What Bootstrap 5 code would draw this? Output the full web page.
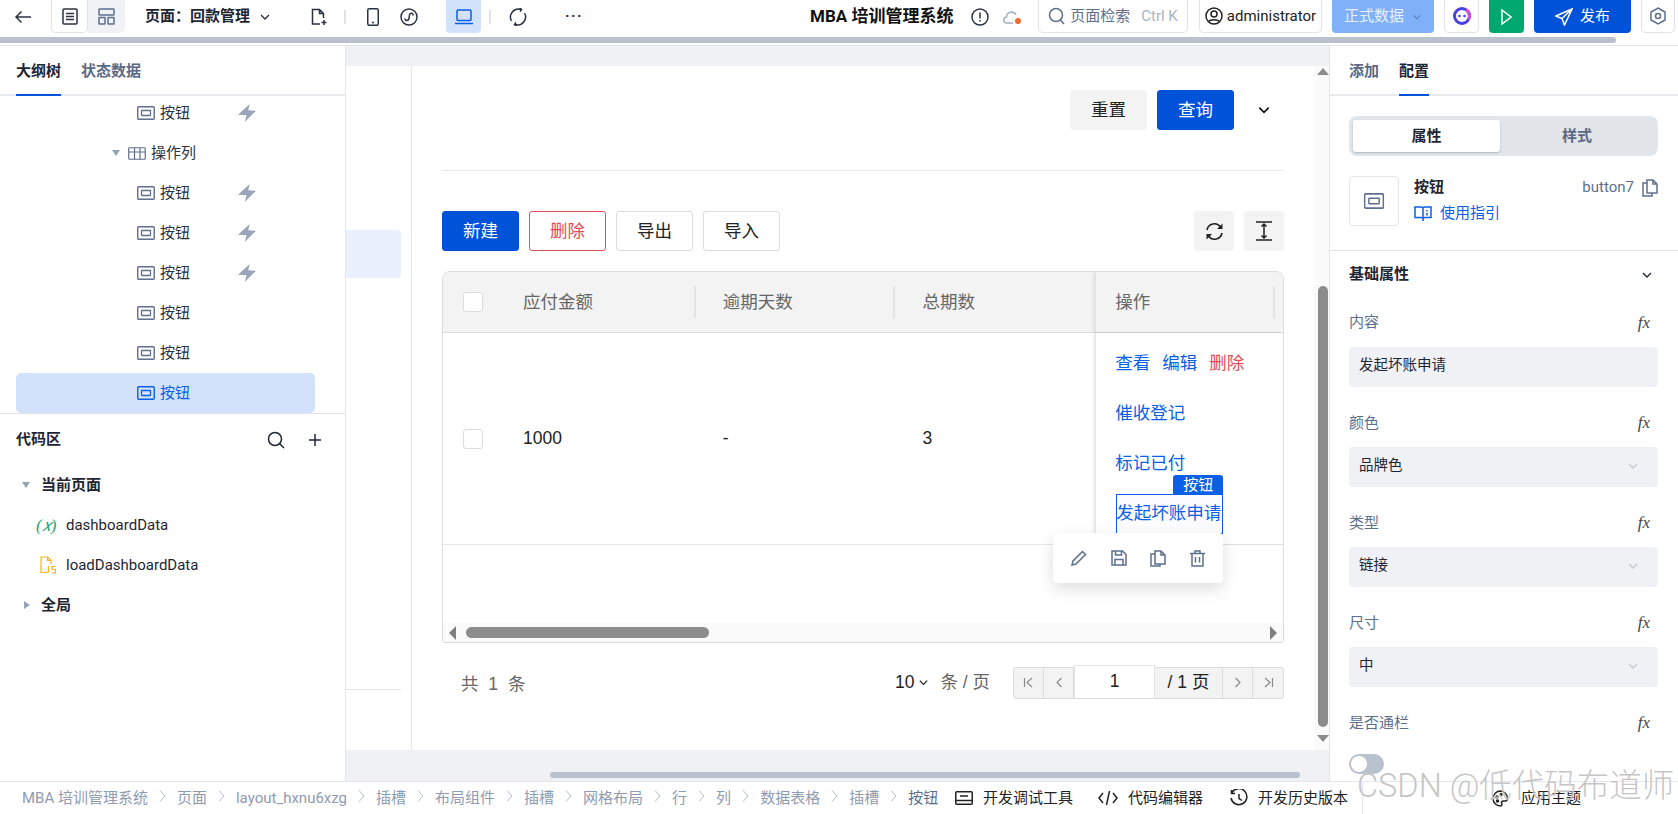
<!DOCTYPE html>
<html lang="zh-CN">
<head>
<meta charset="UTF-8">
<meta name="viewport" content="width=device-width, initial-scale=1.0">
<title>MBA培训管理系统</title>
<link href="https://cdn.jsdelivr.net/npm/bootstrap@5.3.0/dist/css/bootstrap.min.css" rel="stylesheet">
<style>
html, body { height: 100%; overflow: hidden; }
body { font-family: Roboto, "Noto Sans CJK SC", sans-serif; font-size: 15px; color: #1f2633; background: #fff; }
svg { display: block; flex: none; }
.ic { fill: none; stroke: currentColor; stroke-width: 1.5; }
.app { height: 814px; width: 1678px; position: relative; }

/* top bar */
.topbar { height: 37px; }
.seg-ic { width: 37px; height: 33px; }
.seg-on { background: #fff; border: 1px solid #dfe2e8; border-top: 0; border-radius: 0 0 5px 5px; color: #2a3242; }
.seg-off { background: #f0f2f5; border-radius: 0 0 5px 0; color: #5e6f8e; }
.page-name { width: 106px; margin-left: 20px; font-weight: 600; white-space: nowrap; }
.top-ic { position: absolute; top: 0; height: 33px; display: flex; align-items: center; justify-content: center; color: #2a3242; }
.top-sep { width: 2px; height: 14px; background: #dfe2e8; }
.app-title { font-size: 17px; font-weight: 700; white-space: nowrap; color: #111; }
.top-box { height: 33px; border: 1px solid #dfe2e8; border-top: 0; border-radius: 0 0 5px 5px; background: #fff; }
.top-strip { height: 9px; border-bottom: 1px solid #e4e6eb; }
.top-strip div { width: 1616px; height: 6px; background: #b9c1cd; border-radius: 0 3px 3px 0; }

/* main area */
.workspace { height: 735px; }
.side-left { width: 346px; border-right: 1px solid #e4e6eb; }
.tabs-row { height: 50px; border-bottom: 2px solid #e8eaee; padding-left: 16px; gap: 20px; }
.tab-item { height: 50px; line-height: 51px; color: #5a6a85; font-weight: 600; font-size: 15px; }
.tab-on { color: #1f2633; border-bottom: 2px solid #0052d9; }
.tree-box { height: 318px; overflow: hidden; border-bottom: 1px solid #dfe2e8; }
.tree-list { margin-top: -3px; }
.tree-row { height: 40px; margin: 0 30px 0 16px; padding-left: 121px; border-radius: 5px; color: #2a3242; position: relative; }
.tree-row span { margin-left: 5px; }
.tree-head { padding-left: 96px; }
.tree-sel { background: #d2e2fb; color: #0b5fe6; }
.tree-bolt { position: absolute; left: 222px; top: 11px; color: #9aa6b8; }
.tree-tb { color: #5e6f8e; }
.tree-sel .tree-tb { color: #0b5fe6; }
.code-head { height: 51px; padding: 0 24px 0 16px; font-weight: 600; }
.code-row { height: 40px; }
.caret-d { width: 0; height: 0; border: 4px solid transparent; border-top: 6px solid #98a3b5; border-bottom: 0; }
.caret-r { width: 0; height: 0; border: 4px solid transparent; border-left: 6px solid #98a3b5; border-right: 0; }

/* canvas */
.canvas-wrap { width: 983px; background: #eff1f5; }
.canvas-white { margin-top: 20px; height: 684px; background: #fff; }
.stub { width: 66px; border-right: 1px solid #e4e6eb; position: relative; }
.stub-hl { margin-top: 164px; width: 55px; height: 48px; background: #e9f1fe; border-radius: 0 4px 4px 0; }
.stub-line { margin-top: 411px; width: 55px; height: 1px; background: #e4e6eb; }
.page-main { width: 902px; padding: 24px 30px 0; }
.act-btn { height: 40px; width: 77px; border-radius: 3px; padding: 0; --bs-btn-font-size: 17.5px; }
.btn-soft { background: #f3f3f3; border-color: #f3f3f3; color: #222; }
.btn-brand { background: #0052d9; border-color: #0052d9; color: #fff; }
.btn-line { background: #fff; border-color: #dcdcdc; color: #222; }
.btn-red { background: #fff; border-color: #e34d59; color: #e34d59; }
.tool-btn { width: 40px; height: 40px; background: #f3f3f3; border-radius: 3px; color: #222; }
.rule { height: 1px; background: #e7e7e7; margin: 40px 0; }
.bar-gap { gap: 10px; }
.grid-box { margin-top: 20px; height: 372px; border: 1px solid #dcdcdc; border-radius: 8px 8px 3px 3px; overflow: hidden; position: relative; font-family: "Liberation Sans", "Noto Sans CJK SC", sans-serif; }
.grid-head { height: 61px; background: #f3f3f3; border-bottom: 1px solid #dcdcdc; color: #666; font-size: 17.5px; }
.grid-body { height: 212px; border-bottom: 1px solid #e7e7e7; font-size: 17.5px; color: #222; }
.col-chk { width: 53px; padding-left: 20px; }
.col-chk .form-check-input { width: 20px; height: 20px; margin: 0; border-color: #dcdcdc; border-radius: 3px; float: none; display: block; }
.col-txt { width: 200px; padding-left: 27px; position: relative; }
.col-fix { width: 188px; height: 100%; padding-left: 19px; position: relative; box-shadow: -2px 0 3px rgba(0,0,0,.07); border-left: 1px solid #e4e4e4; }
.head-sep { position: absolute; right: 0; top: 50%; margin-top: -16px; width: 2px; height: 32px; background: #e4e4e4; }
.op-link { color: #0b5fe6; text-decoration: none; }
.op-red { color: #e34d59; }
.op-line { height: 50px; gap: 12px; }
.grid-scroll { position: absolute; left: 0; right: 0; bottom: 0; height: 19px; background: #fafafa; padding: 0 6px; }
.hthumb { width: 243px; height: 11px; background: #8c8c8c; border-radius: 6px; margin-left: 10px; }
.tri-l { width: 0; height: 0; border: 7px solid transparent; border-right: 7px solid #7f7f7f; border-left: 0; }
.tri-r { width: 0; height: 0; border: 7px solid transparent; border-left: 7px solid #7f7f7f; border-right: 0; }
.sel-box { position: absolute; left: 20px; top: 161px; width: 107px; height: 40px; border: 1px solid #0b5fe6; line-height: 36px; white-space: nowrap; text-indent: -1px; background: rgba(250,250,253,.6); }
.sel-tag { position: absolute; right: -1px; top: -20px; width: 50px; height: 20px; background: #0b5fe6; color: #fff; font-size: 15px; line-height: 20px; text-align: center; text-indent: 0; border-radius: 3px 3px 0 0; }
.float-tools { position: absolute; left: 1053px; top: 533px; width: 170px; height: 50px; background: #fff; border-radius: 4px; box-shadow: 0 6px 16px rgba(0,0,0,.13); padding: 0 14px; color: #5e6f8e; z-index: 3; }
.pager { height: 78px; font-size: 17.5px; color: #222; padding-top: 1px; font-family: "Liberation Sans", "Noto Sans CJK SC", sans-serif; }
.pager-gray { color: #666; }
.pager-total { margin: 3px 0 0 19px; word-spacing: 5px; }
.pg-box { height: 32px; width: 271px; border: 1px solid #dcdcdc; border-radius: 3px; background: #f3f3f3; color: #8a8a8a; }
.pg-cell { width: 30px; height: 100%; border-right: 1px solid #dcdcdc; }
.pg-num { width: 81px; height: 34px; margin-top: -2px; background: #fff; border: 1px solid #e4e4e4; border-bottom-color: #dcdcdc; color: #222; }
.pg-all { width: 68px; height: 100%; color: #222; border-right: 1px solid #dcdcdc; }
.v-track { width: 15px; background: #fafafa; position: relative; }
.v-thumb { position: absolute; left: 4px; top: 220px; width: 10px; height: 441px; border-radius: 5px; background: #8c8c8c; }
.tri-u, .tri-dn { position: absolute; left: 3px; width: 0; height: 0; border: 6px solid transparent; }
.tri-u { top: 2px; border-bottom: 7px solid #8c8c8c; border-top: 0; }
.tri-dn { top: 669px; border-top: 7px solid #8c8c8c; border-bottom: 0; }
.canvas-bar { height: 31px; padding: 22px 0 0 204px; }
.canvas-bar div { width: 750px; height: 6px; background: #b9c1cd; border-radius: 3px; }

/* right panel */
.side-right { width: 349px; border-left: 1px solid #e4e6eb; }
.tabs-right { padding-left: 19px; }
.seg-switch { margin: 20px 20px 0 19px; height: 40px; background: #e2e5ea; border-radius: 8px; padding: 4px; font-weight: 600; color: #5a6a85; font-size: 15px; }
.seg-switch div { width: 147px; padding-top: 1px; }
.seg-active { background: #fff; color: #1f2633; border-radius: 3px; box-shadow: 0 1px 2px rgba(60,70,90,.3); }
.comp-info { margin: 20px 20px 0 19px; height: 50px; position: relative; }
.comp-ic { width: 50px; height: 50px; border: 1px solid #e4e6eb; border-radius: 4px; color: #5e6f8e; }
.guide { color: #0b5fe6; }
.prop-area { margin-top: 24px; border-top: 1px solid #e4e6eb; padding: 0 20px 0 19px; }
.prop-title { height: 47px; font-weight: 600; }
.prop-label { height: 48px; color: #5e6f8e; }
.fx { font-family: "Liberation Serif", serif; font-style: italic; font-size: 17px; color: #444; padding-right: 8px; }
.prop-input { height: 40px; background: #f0f1f5; border-radius: 4px; padding: 0 10px 2px; font-size: 14.5px; }
.prop-gap { height: 12px; }
.prop-chev { color: #c2c8d2; margin-right: 9px; }
.toggle-off { width: 35px; height: 20px; border-radius: 10px; background: #b9c1cd; margin-top: 7px; padding: 2px; }
.toggle-off div { width: 16px; height: 16px; border-radius: 50%; background: #fff; }

/* bottom bar */
.bottombar { height: 33px; border-top: 1px solid #e4e6eb; padding-left: 22px; position: relative; }
.crumbs { --bs-breadcrumb-divider: url("data:image/svg+xml,%3Csvg xmlns='http://www.w3.org/2000/svg' width='7' height='14'%3E%3Cpath d='M1 1.500 6 7l-5 5.500' fill='none' stroke='%23b4bcc9'/%3E%3C/svg%3E"); --bs-breadcrumb-margin-bottom: 0; --bs-breadcrumb-item-padding-x: 11px; --bs-breadcrumb-item-active-color: #5e6f8e; color: #8f9bb0; font-size: 15px; width: 933px; flex-wrap: nowrap; white-space: nowrap; }
.crumbs .breadcrumb-item { display: flex; align-items: center; }
.dev-tools { color: #222; font-size: 15px; white-space: nowrap; }
.theme-link { position: absolute; left: 1492px; top: 5px; height: 22px; font-size: 15px; color: #222; }
.theme-link svg { margin-right: 12px; }
.end-sep { position: absolute; left: 1362px; top: 0; width: 1px; height: 33px; background: #e4e6eb; }
.watermark { position: absolute; left: 1357px; top: 766px; font-size: 32.5px; line-height: 40px; color: rgba(140,140,140,.5); text-shadow: 0 0 1px #fff; white-space: nowrap; font-weight: 300; z-index: 5; }
</style>
</head>
<body>
<svg width="0" height="0" style="position:absolute">
  <symbol id="i-btn" viewBox="0 0 18 14"><rect x=".75" y=".75" width="16.5" height="12.5" rx="1" fill="none" stroke="currentColor" stroke-width="1.4"/><rect x="4.5" y="4.5" width="9" height="5" rx=".5" fill="none" stroke="currentColor" stroke-width="1.3"/></symbol>
  <symbol id="i-bolt" viewBox="0 0 16 16"><path d="M10.5 0 L9 5.5 L16 6 L6 16 L7.5 10 L0 9.5 Z" fill="currentColor"/></symbol>
  <symbol id="i-down" viewBox="0 0 12 12"><path d="M2 4l4 4 4-4" fill="none" stroke="currentColor" stroke-width="1.4"/></symbol>
</svg>
<div class="app d-flex flex-column">

  <!-- top bar -->
  <div class="topbar d-flex align-items-start position-relative">
    <div class="top-ic" style="left:14px"><svg width="18" height="14" viewBox="0 0 18 14" class="ic"><path d="M17 7H2M7.5 1.5 2 7l5.5 5.5"/></svg></div>
    <div class="d-flex" style="margin-left:51px">
      <div class="seg-ic seg-on d-flex align-items-center justify-content-center"><svg width="16" height="17" viewBox="0 0 16 17" class="ic"><rect x="1" y="1" width="14" height="15" rx="1"/><path d="M4 5.500h8M4 8.500h8M4 11.500h8"/></svg></div>
      <div class="seg-ic seg-off d-flex align-items-center justify-content-center"><svg width="17" height="17" viewBox="0 0 17 17" class="ic"><rect x="1" y="1" width="15" height="6" rx=".5"/><rect x="1" y="9.500" width="6" height="6.500" rx=".5"/><rect x="10" y="9.500" width="6" height="6.500" rx=".5"/></svg></div>
    </div>
    <div class="page-name d-flex align-items-center" style="height:33px">页面：回款管理</div>
    <div class="top-ic" style="left:259px"><svg width="12" height="12"><use href="#i-down"/></svg></div>
    <div class="top-ic" style="left:311px"><svg width="17" height="18" viewBox="0 0 17 18" class="ic"><path d="M9 16H1.500V1.500h7l4 4V10M8.500 1.500v4h4M13 12v5M10.500 14.500h5"/></svg></div>
    <div class="top-ic" style="left:344px"><div class="top-sep"></div></div>
    <div class="top-ic" style="left:367px"><svg width="12" height="18" viewBox="0 0 12 18" class="ic"><rect x=".75" y=".75" width="10.500" height="16.500" rx="1.500"/><path d="M5 14.500h2"/></svg></div>
    <div class="top-ic" style="left:400px"><svg width="18" height="18" viewBox="0 0 18 18" class="ic"><circle cx="9" cy="9" r="8"/><path d="M5 10.500c0 3 3.500 2.500 4 0l.5-3.500c.5-2.500 4-2.500 3.500.5"/></svg></div>
    <div class="top-ic" style="left:446px;width:35px;background:#d2e2fb;border-radius:0 0 4px 4px;color:#0b5fe6"><svg width="18" height="16" viewBox="0 0 18 16" class="ic"><rect x="2" y="1" width="14" height="10.500" rx="1"/><path d="M0 14.500h18"/></svg></div>
    <div class="top-ic" style="left:489px"><div class="top-sep"></div></div>
    <div class="top-ic" style="left:509px"><svg width="18" height="18" viewBox="0 0 18 18" class="ic"><path d="M2.500 13A8 8 0 0 1 12 1.500M15.500 5A8 8 0 0 1 6 16.500"/><path d="M10.500 0l2 1.500-1.500 2M7.500 18l-2-1.500 1.500-2"/></svg></div>
    <div class="top-ic" style="left:565px;letter-spacing:1.500px;font-weight:700;line-height:1">···</div>

    <div class="top-ic app-title" style="left:810px">MBA 培训管理系统</div>
    <div class="top-ic" style="left:971px"><svg width="18" height="18" viewBox="0 0 18 18" class="ic"><circle cx="9" cy="9" r="8"/><path d="M9 4.500v6M9 12v1.500"/></svg></div>
    <div class="top-ic" style="left:1003px;color:#a5afbf"><svg width="19" height="16" viewBox="0 0 19 16" class="ic"><path d="M10 14H4a3 3 0 0 1-.5-6 5 5 0 0 1 9.500-2"/><circle cx="15" cy="12" r="3" fill="#ed6a2c" stroke="none"/></svg></div>
    <div class="top-box top-ic" style="left:1038px;width:150px;color:#5e6f8e;gap:4px"><svg width="18" height="18" viewBox="0 0 18 18" class="ic"><circle cx="8" cy="8" r="6.500"/><path d="M12.500 13l3.500 4"/></svg><span>页面检索</span><span style="color:#a9b3c2;margin-left:7px">Ctrl K</span></div>
    <div class="top-box top-ic" style="left:1199px;width:123px;gap:4px;color:#222"><svg width="18" height="18" viewBox="0 0 18 18" class="ic"><circle cx="9" cy="9" r="8"/><circle cx="9" cy="7" r="3"/><path d="M3.500 15c1-3 10-3 11 0"/></svg><span>administrator</span></div>
    <div class="top-ic" style="left:1332px;width:102px;background:#80b0f8;color:#e8f0fe;border-radius:0 0 4px 4px;gap:8px"><span>正式数据</span><svg width="10" height="10" style="color:#5f7fb8"><use href="#i-down"/></svg></div>
    <div class="top-box top-ic" style="left:1444px;width:35px"><svg width="20" height="20" viewBox="0 0 20 20"><circle cx="10" cy="10" r="7.500" fill="none" stroke="#4a3fe0" stroke-width="3"/><path d="M14 3.500a7.500 7.500 0 0 1 2.500 10" fill="none" stroke="#d04cd6" stroke-width="3"/><circle cx="7.500" cy="10" r="1.300" fill="#4a3fe0"/><circle cx="12.500" cy="10" r="1.300" fill="#4a3fe0"/></svg></div>
    <div class="top-ic" style="left:1489px;width:35px;background:#00a870;border-radius:0 0 4px 4px;color:#fff"><svg width="11" height="16" viewBox="0 0 11 16" class="ic"><path d="M1 1l9 7-9 7z"/></svg></div>
    <div class="top-ic" style="left:1534px;width:97px;background:#0052d9;border-radius:0 0 4px 4px;color:#fff;gap:7px"><svg width="18" height="18" viewBox="0 0 18 18" class="ic"><path d="M17 1 1 8l6 2.500L9.500 17zM7 10.500 17 1"/></svg><span>发布</span></div>
    <div class="top-box top-ic" style="left:1641px;width:34px;color:#5e6f8e"><svg width="16" height="18" viewBox="0 0 16 18" class="ic"><path d="M8 1l7 4v8l-7 4-7-4V5z"/><circle cx="8" cy="9" r="2.500"/></svg></div>
  </div>
  <div class="top-strip"><div></div></div>

  <div class="workspace d-flex">
    <!-- left panel -->
    <div class="side-left flex-none">
      <div class="tabs-row d-flex">
        <div class="tab-item tab-on">大纲树</div>
        <div class="tab-item">状态数据</div>
      </div>
      <div class="tree-box">
        <div class="tree-list">
          <div class="tree-row d-flex align-items-center"><svg class="tree-tb" width="18" height="14"><use href="#i-btn"/></svg><span>按钮</span><svg class="tree-bolt" width="18" height="18"><use href="#i-bolt"/></svg></div>
          <div class="tree-row tree-head d-flex align-items-center"><div class="caret-d me-2"></div><svg width="18" height="13" viewBox="0 0 18 13" class="ic tree-tb" style="stroke-width:1.200"><rect x=".75" y=".75" width="16.500" height="11.500" rx="1"/><path d="M.75 5h16.500M6.500.75v11.500M12 .75v11.500"/></svg><span>操作列</span></div>
          <div class="tree-row d-flex align-items-center"><svg class="tree-tb" width="18" height="14"><use href="#i-btn"/></svg><span>按钮</span><svg class="tree-bolt" width="18" height="18"><use href="#i-bolt"/></svg></div>
          <div class="tree-row d-flex align-items-center"><svg class="tree-tb" width="18" height="14"><use href="#i-btn"/></svg><span>按钮</span><svg class="tree-bolt" width="18" height="18"><use href="#i-bolt"/></svg></div>
          <div class="tree-row d-flex align-items-center"><svg class="tree-tb" width="18" height="14"><use href="#i-btn"/></svg><span>按钮</span><svg class="tree-bolt" width="18" height="18"><use href="#i-bolt"/></svg></div>
          <div class="tree-row d-flex align-items-center"><svg class="tree-tb" width="18" height="14"><use href="#i-btn"/></svg><span>按钮</span></div>
          <div class="tree-row d-flex align-items-center"><svg class="tree-tb" width="18" height="14"><use href="#i-btn"/></svg><span>按钮</span></div>
          <div class="tree-row tree-sel d-flex align-items-center"><svg class="tree-tb" width="18" height="14"><use href="#i-btn"/></svg><span>按钮</span></div>
        </div>
      </div>
      <div class="code-head d-flex align-items-center">
        <div class="flex-grow-1">代码区</div>
        <svg width="18" height="18" viewBox="0 0 18 18" class="ic me-4"><circle cx="8" cy="8" r="6.500"/><path d="M12.500 12.500 17 17"/></svg>
        <svg width="12" height="12" viewBox="0 0 12 12" class="ic"><path d="M6 0v12M0 6h12"/></svg>
      </div>
      <div class="code-row d-flex align-items-center" style="padding-left:22px"><div class="caret-d"></div><b class="fw-semibold" style="margin-left:11px">当前页面</b></div>
      <div class="code-row d-flex align-items-center" style="padding-left:36px"><span style="color:#2ba471;font-family:'Liberation Serif',serif;font-style:italic;width:30px;font-size:17px;line-height:1">(𝑥)</span><span>dashboardData</span></div>
      <div class="code-row d-flex align-items-center" style="padding-left:40px"><svg width="16" height="18" viewBox="0 0 16 18" fill="none" stroke="#f5b41e" stroke-width="1.200" style="margin-right:10px"><path d="M6 16.500H1V1h6.500L11 4.500V8M7.500 1v3.500H11"/><path d="M8.500 10v5.500c0 1.200-2 1.200-2.200 0M15.500 10.500h-3.500v3h3.500v3.500h-3.500"/></svg><span>loadDashboardData</span></div>
      <div class="code-row d-flex align-items-center" style="padding-left:24px"><div class="caret-r"></div><b class="fw-semibold" style="margin-left:11px">全局</b></div>
    </div>

    <!-- canvas -->
    <div class="canvas-wrap flex-none">
      <div class="canvas-white d-flex">
        <div class="stub flex-none"><div class="stub-hl"></div><div class="stub-line"></div></div>
        <div class="page-main flex-none">
          <div class="d-flex align-items-center justify-content-end">
            <button class="btn act-btn btn-soft">重置</button>
            <button class="btn act-btn btn-brand" style="margin-left:10px">查询</button>
            <svg width="14" height="14" style="margin:0 13px 0 23px;color:#111"><use href="#i-down"/></svg>
          </div>
          <div class="rule"></div>
          <div class="d-flex align-items-center bar-gap">
            <button class="btn act-btn btn-brand">新建</button>
            <button class="btn act-btn btn-red">删除</button>
            <button class="btn act-btn btn-line">导出</button>
            <button class="btn act-btn btn-line">导入</button>
            <div class="tool-btn d-flex align-items-center justify-content-center ms-auto"><svg width="19" height="19" viewBox="0 0 19 19" class="ic" style="stroke-width:1.600"><path d="M2 8a7.500 7.500 0 0 1 13.500-3M17 11a7.500 7.500 0 0 1-13.500 3"/><path d="M17.500 1.500v5.500H12zM1.500 17.500V12H7z" fill="currentColor" stroke="none"/></svg></div>
            <div class="tool-btn d-flex align-items-center justify-content-center"><svg width="16" height="20" viewBox="0 0 16 20" class="ic"><path d="M0 1h16M0 19h16M8 3v14M5.500 5.500 8 3l2.500 2.500M5.500 14.500 8 17l2.500-2.500"/></svg></div>
          </div>

          <div class="grid-box">
            <div class="grid-head d-flex align-items-center">
              <div class="col-chk"><input class="form-check-input" type="checkbox"></div>
              <div class="col-txt h-100 d-flex align-items-center">应付金额<div class="head-sep"></div></div>
              <div class="col-txt h-100 d-flex align-items-center">逾期天数<div class="head-sep"></div></div>
              <div class="col-txt h-100 d-flex align-items-center">总期数</div>
              <div class="col-fix d-flex align-items-center">操作<div class="head-sep" style="right:8px"></div></div>
            </div>
            <div class="grid-body d-flex align-items-center">
              <div class="col-chk"><input class="form-check-input" type="checkbox"></div>
              <div class="col-txt">1000</div>
              <div class="col-txt">-</div>
              <div class="col-txt">3</div>
              <div class="col-fix">
                <div class="op-line d-flex align-items-center" style="margin-top:5px"><a class="op-link" href="#">查看</a><a class="op-link" href="#">编辑</a><a class="op-link op-red" href="#">删除</a></div>
                <div class="op-line d-flex align-items-center"><a class="op-link" href="#">催收登记</a></div>
                <div class="op-line d-flex align-items-center"><a class="op-link" href="#">标记已付</a></div>
                <div class="sel-box op-link">发起坏账申请<div class="sel-tag">按钮</div></div>
              </div>
            </div>
            <div class="grid-scroll d-flex align-items-center">
              <div class="tri-l"></div><div class="hthumb"></div><div class="tri-r ms-auto"></div>
            </div>
          </div>

          <div class="pager d-flex align-items-center">
            <div class="pager-gray pager-total">共 1 条</div>
            <div class="ms-auto d-flex align-items-center">10<svg width="11" height="11" class="ms-1"><use href="#i-down"/></svg></div>
            <div class="pager-gray" style="margin:0 23px 0 11px">条 / 页</div>
            <div class="pg-box d-flex align-items-center">
              <div class="pg-cell d-flex align-items-center justify-content-center"><svg width="11" height="11" viewBox="0 0 11 11" class="ic" style="stroke-width:1.200"><path d="M1.500 1v9M9 1 4 5.500 9 10"/></svg></div>
              <div class="pg-cell d-flex align-items-center justify-content-center"><svg width="8" height="11" viewBox="0 0 8 11" class="ic" style="stroke-width:1.200"><path d="M6.500 1 2 5.500 6.500 10"/></svg></div>
              <div class="pg-num d-flex align-items-center justify-content-center">1</div>
              <div class="pg-all d-flex align-items-center justify-content-center">/ 1 页</div>
              <div class="pg-cell d-flex align-items-center justify-content-center"><svg width="8" height="11" viewBox="0 0 8 11" class="ic" style="stroke-width:1.200"><path d="M1.500 1 6 5.500 1.500 10"/></svg></div>
              <div class="pg-cell d-flex align-items-center justify-content-center border-0"><svg width="11" height="11" viewBox="0 0 11 11" class="ic" style="stroke-width:1.200"><path d="M9.500 1v9M2 1l5 4.500L2 10"/></svg></div>
            </div>
          </div>
        </div>
        <div class="v-track flex-none"><div class="tri-u"></div><div class="v-thumb"></div><div class="tri-dn"></div></div>
      </div>
      <div class="canvas-bar"><div></div></div>
    </div>

    <!-- right panel -->
    <div class="side-right flex-grow-1">
      <div class="tabs-row tabs-right d-flex">
        <div class="tab-item">添加</div>
        <div class="tab-item tab-on">配置</div>
      </div>
      <div class="seg-switch d-flex">
        <div class="seg-active d-flex align-items-center justify-content-center">属性</div>
        <div class="d-flex align-items-center justify-content-center flex-grow-1">样式</div>
      </div>
      <div class="comp-info d-flex">
        <div class="comp-ic d-flex align-items-center justify-content-center"><svg width="22" height="16" viewBox="0 0 18 14"><use href="#i-btn"/></svg></div>
        <div style="margin-left:15px">
          <div class="fw-semibold" style="line-height:22px">按钮</div>
          <div class="guide d-flex align-items-center" style="margin-top:4px;line-height:22px"><svg width="18" height="17" viewBox="0 0 18 17" fill="none" stroke="currentColor" stroke-width="1.500" class="me-2"><path d="M1 2h6c1 0 2 .5 2 1.500V14c0-1-1-1.500-2-1.500H1zM17 2h-6c-1 0-2 .5-2 1.500V14c0-1 1-1.500 2-1.500h6zM13 5v1.500M13 8v2.500M8 15h2"/></svg>使用指引</div>
        </div>
        <div class="ms-auto d-flex align-items-start" style="color:#5e6f8e;line-height:22px">button7<svg width="16" height="18" viewBox="0 0 16 18" class="ic ms-2" style="color:#5e6f8e;margin-top:3px"><path d="M5 1h6l4 4v9H5zM11 1v4h4M5 4H1v13h9v-3"/></svg></div>
      </div>
      <div class="prop-area">
        <div class="prop-title d-flex align-items-center justify-content-between">基础属性<svg width="12" height="12" style="margin-right:5px"><use href="#i-down"/></svg></div>
        <div class="prop-label d-flex align-items-center justify-content-between" style="height:49px">内容<span class="fx">fx</span></div>
        <div class="prop-input d-flex align-items-center">发起坏账申请</div>
        <div class="prop-gap"></div>
        <div class="prop-label d-flex align-items-center justify-content-between">颜色<span class="fx">fx</span></div>
        <div class="prop-input d-flex align-items-center justify-content-between">品牌色<svg class="prop-chev" width="12" height="12"><use href="#i-down"/></svg></div>
        <div class="prop-gap"></div>
        <div class="prop-label d-flex align-items-center justify-content-between">类型<span class="fx">fx</span></div>
        <div class="prop-input d-flex align-items-center justify-content-between">链接<svg class="prop-chev" width="12" height="12"><use href="#i-down"/></svg></div>
        <div class="prop-gap"></div>
        <div class="prop-label d-flex align-items-center justify-content-between">尺寸<span class="fx">fx</span></div>
        <div class="prop-input d-flex align-items-center justify-content-between">中<svg class="prop-chev" width="12" height="12"><use href="#i-down"/></svg></div>
        <div class="prop-gap"></div>
        <div class="prop-label d-flex align-items-center justify-content-between">是否通栏<span class="fx">fx</span></div>
        <div class="toggle-off"><div></div></div>
      </div>
    </div>
  </div>

  <!-- bottom bar -->
  <div class="bottombar d-flex align-items-center">
    <ol class="breadcrumb crumbs mb-0">
      <li class="breadcrumb-item">MBA 培训管理系统</li>
      <li class="breadcrumb-item">页面</li>
      <li class="breadcrumb-item">layout_hxnu6xzg</li>
      <li class="breadcrumb-item">插槽</li>
      <li class="breadcrumb-item">布局组件</li>
      <li class="breadcrumb-item">插槽</li>
      <li class="breadcrumb-item">网格布局</li>
      <li class="breadcrumb-item">行</li>
      <li class="breadcrumb-item">列</li>
      <li class="breadcrumb-item">数据表格</li>
      <li class="breadcrumb-item">插槽</li>
      <li class="breadcrumb-item active">按钮</li>
    </ol>
    <div class="dev-tools d-flex align-items-center">
      <svg width="18" height="14" viewBox="0 0 18 14" class="ic" style="margin-right:10px"><rect x=".75" y=".75" width="16.500" height="12.500" rx="1"/><path d="M.75 9.500h16.500M5 5h8"/></svg>开发调试工具
      <svg width="20" height="16" viewBox="0 0 20 16" class="ic" style="margin:0 10px 0 25px"><path d="M5 3 1 8l4 5M15 3l4 5-4 5M11.500 1l-3 14"/></svg>代码编辑器
      <svg width="18" height="18" viewBox="0 0 18 18" class="ic" style="margin:0 10px 0 27px"><path d="M2 3.500A8 8 0 1 1 1 9M1.500 1v3.500H5M9 5v4.500l3 2"/></svg>开发历史版本
    </div>
    <div class="end-sep"></div>
    <div class="theme-link d-flex align-items-center"><svg width="17" height="17" viewBox="0 0 17 17" class="ic"><path d="M8.500 1a7.500 7.500 0 1 0 0 15c2 0 1.500-2 1-3s.5-2 2-2h2c1.500 0 2-1 2-3A7.500 7.500 0 0 0 8.500 1z"/><circle cx="5" cy="7" r="1" fill="currentColor"/><circle cx="9" cy="4.500" r="1" fill="currentColor"/><circle cx="5.500" cy="11" r="1" fill="currentColor"/></svg>应用主题</div>
  </div>

  <!-- floating -->
  <div class="float-tools d-flex align-items-center justify-content-between">
    <svg width="16" height="16" viewBox="0 0 16 16" class="ic ms-1"><path d="M11.500 1.500l3 3L5 14l-4 1 1-4z"/></svg>
    <svg width="16" height="16" viewBox="0 0 16 16" class="ic"><path d="M1 1h10.500L15 4.500V15H1zM4.500 1v4h6V1M4 15V9.500h8V15"/></svg>
    <svg width="16" height="17" viewBox="0 0 16 17" class="ic"><path d="M5 1h6l4 4v9H5zM11 1v4h4M5 4H1v12h9v-2"/></svg>
    <svg width="15" height="17" viewBox="0 0 15 17" class="ic me-1"><path d="M0 3.500h15M5 3.500V1h5v2.500M2 3.500V16h11V3.500M5.500 7v5.500M9.500 7v5.500"/></svg>
  </div>
  <div class="watermark">CSDN @低代码布道师</div>
</div>
<script src="https://cdn.jsdelivr.net/npm/bootstrap@5.3.0/dist/js/bootstrap.bundle.min.js"></script>
</body>
</html>
